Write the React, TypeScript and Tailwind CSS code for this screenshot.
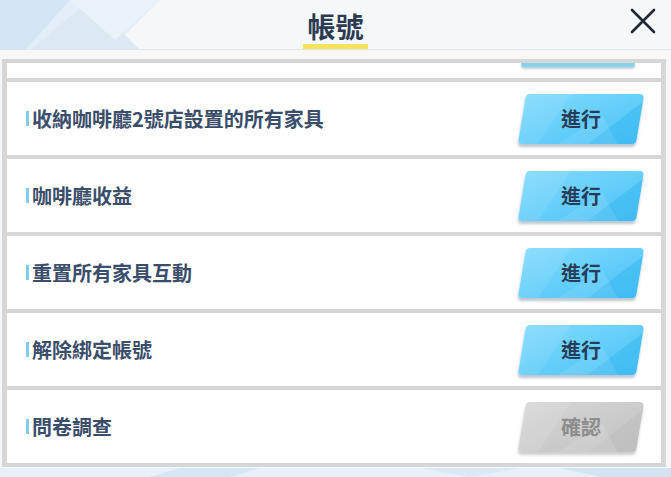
import React from "react";

const rows = [
  { label: "收納咖啡廳2號店設置的所有家具", btn: "進行", active: true },
  { label: "咖啡廳收益", btn: "進行", active: true },
  { label: "重置所有家具互動", btn: "進行", active: true },
  { label: "解除綁定帳號", btn: "進行", active: true },
  { label: "問卷調查", btn: "確認", active: false },
];

function Btn({ text, active }: { text: string; active: boolean }) {
  return (
    <div className="relative w-[118px] h-[50px]">
      <div
        className={
          "absolute inset-0 -skew-x-[9.5deg] rounded-[4px] overflow-hidden " +
          (active
            ? "bg-gradient-to-br from-[#82dbfd] via-[#66cffa] to-[#47c1f6] shadow-[0_3px_3px_rgba(60,90,120,0.35)]"
            : "bg-gradient-to-br from-[#d6d6d6] via-[#cccccc] to-[#c2c2c2] shadow-[0_3px_3px_rgba(90,90,90,0.3)]")
        }
      >
        <svg className="absolute inset-0" width="118" height="50" viewBox="0 0 118 50" preserveAspectRatio="none">
          <polygon points="0,0 45,0 20,50 0,50" fill="white" opacity={active ? 0.08 : 0.1} />
          <polygon points="70,50 118,8 118,50" fill={active ? "#3ab8f0" : "#bdbdbd"} opacity="0.55" />
          <polygon points="40,50 80,22 100,50" fill="white" opacity={active ? 0.1 : 0.12} />
        </svg>
      </div>
      <div
        className={
          "absolute inset-0 flex items-center justify-center text-[20px] font-bold leading-none " +
          (active ? "text-[#283c58]" : "text-[#8d8d8d]")
        }
      >
        {text}
      </div>
    </div>
  );
}

export default function App() {
  return (
    <div
      className="relative w-[671px] h-[477px] overflow-hidden bg-[#f5f8fb]"
      style={{ fontFamily: '"Noto Sans CJK TC", "Noto Sans", sans-serif' }}
    >
      <svg className="absolute inset-0" width="671" height="477" viewBox="0 0 671 477">
        <polygon points="0,0 160,0 110,50 0,50" fill="#e3eef8" />
        <polygon points="0,0 70,0 25,50 0,50" fill="#d3e5f4" />
        <polygon points="30,50 90,0 140,50" fill="#dce9f5" />
        <polygon points="70,0 160,0 115,40" fill="#eaf2f9" />
        <polygon points="0,468 671,468 671,477 0,477" fill="#e6f0f8" />
        <polygon points="180,468 260,468 230,477 150,477" fill="#d5e6f4" />
        <polygon points="420,468 520,468 470,477" fill="#dbe9f5" />
        <polygon points="560,468 671,468 671,477 600,477" fill="#d2e4f3" />
      </svg>

      <div className="relative flex flex-col">
        <div className="relative h-[50px] flex items-center justify-center border-b border-[#e2e5e8]">
          <span className="text-[28px] font-bold leading-none text-[#2c3b52] mt-[2px]">帳號</span>
          <div className="absolute left-[303px] top-[44px] w-[65px] h-[5px] bg-[#f6e25c]" />
          <svg className="absolute left-[630px] top-[8px]" width="26" height="26" viewBox="0 0 26 26">
            <path d="M2 2 L24 24 M24 2 L2 24" stroke="#1f2a36" strokeWidth="2.6" strokeLinecap="round" />
          </svg>
        </div>
        <div className="h-[9px] bg-[#f7f7f7]" />

        <div className="ml-[2px] w-[664px] bg-[#d6d6d6] px-[5px] pt-[4px] pb-[4px] flex flex-col gap-[4px]">
          <div className="h-[15px] bg-white relative">
            <div className="absolute right-[26px] top-0 w-[114px] h-[4px] rounded-b-[3px] bg-[#86d3f0] shadow-[0_2px_2px_rgba(60,90,120,0.3)]" />
          </div>
          {rows.map((r) => (
            <div key={r.label} className="h-[73px] bg-white flex items-center justify-between pl-[19px] pr-[21px]">
              <div className="flex items-center gap-[3px]">
                <div className="w-[3px] h-[15px] bg-[#7ecdec]" />
                <span className="text-[20px] font-bold leading-none text-[#3a4e6b]">{r.label}</span>
              </div>
              <Btn text={r.btn} active={r.active} />
            </div>
          ))}
        </div>
      </div>
    </div>
  );
}
